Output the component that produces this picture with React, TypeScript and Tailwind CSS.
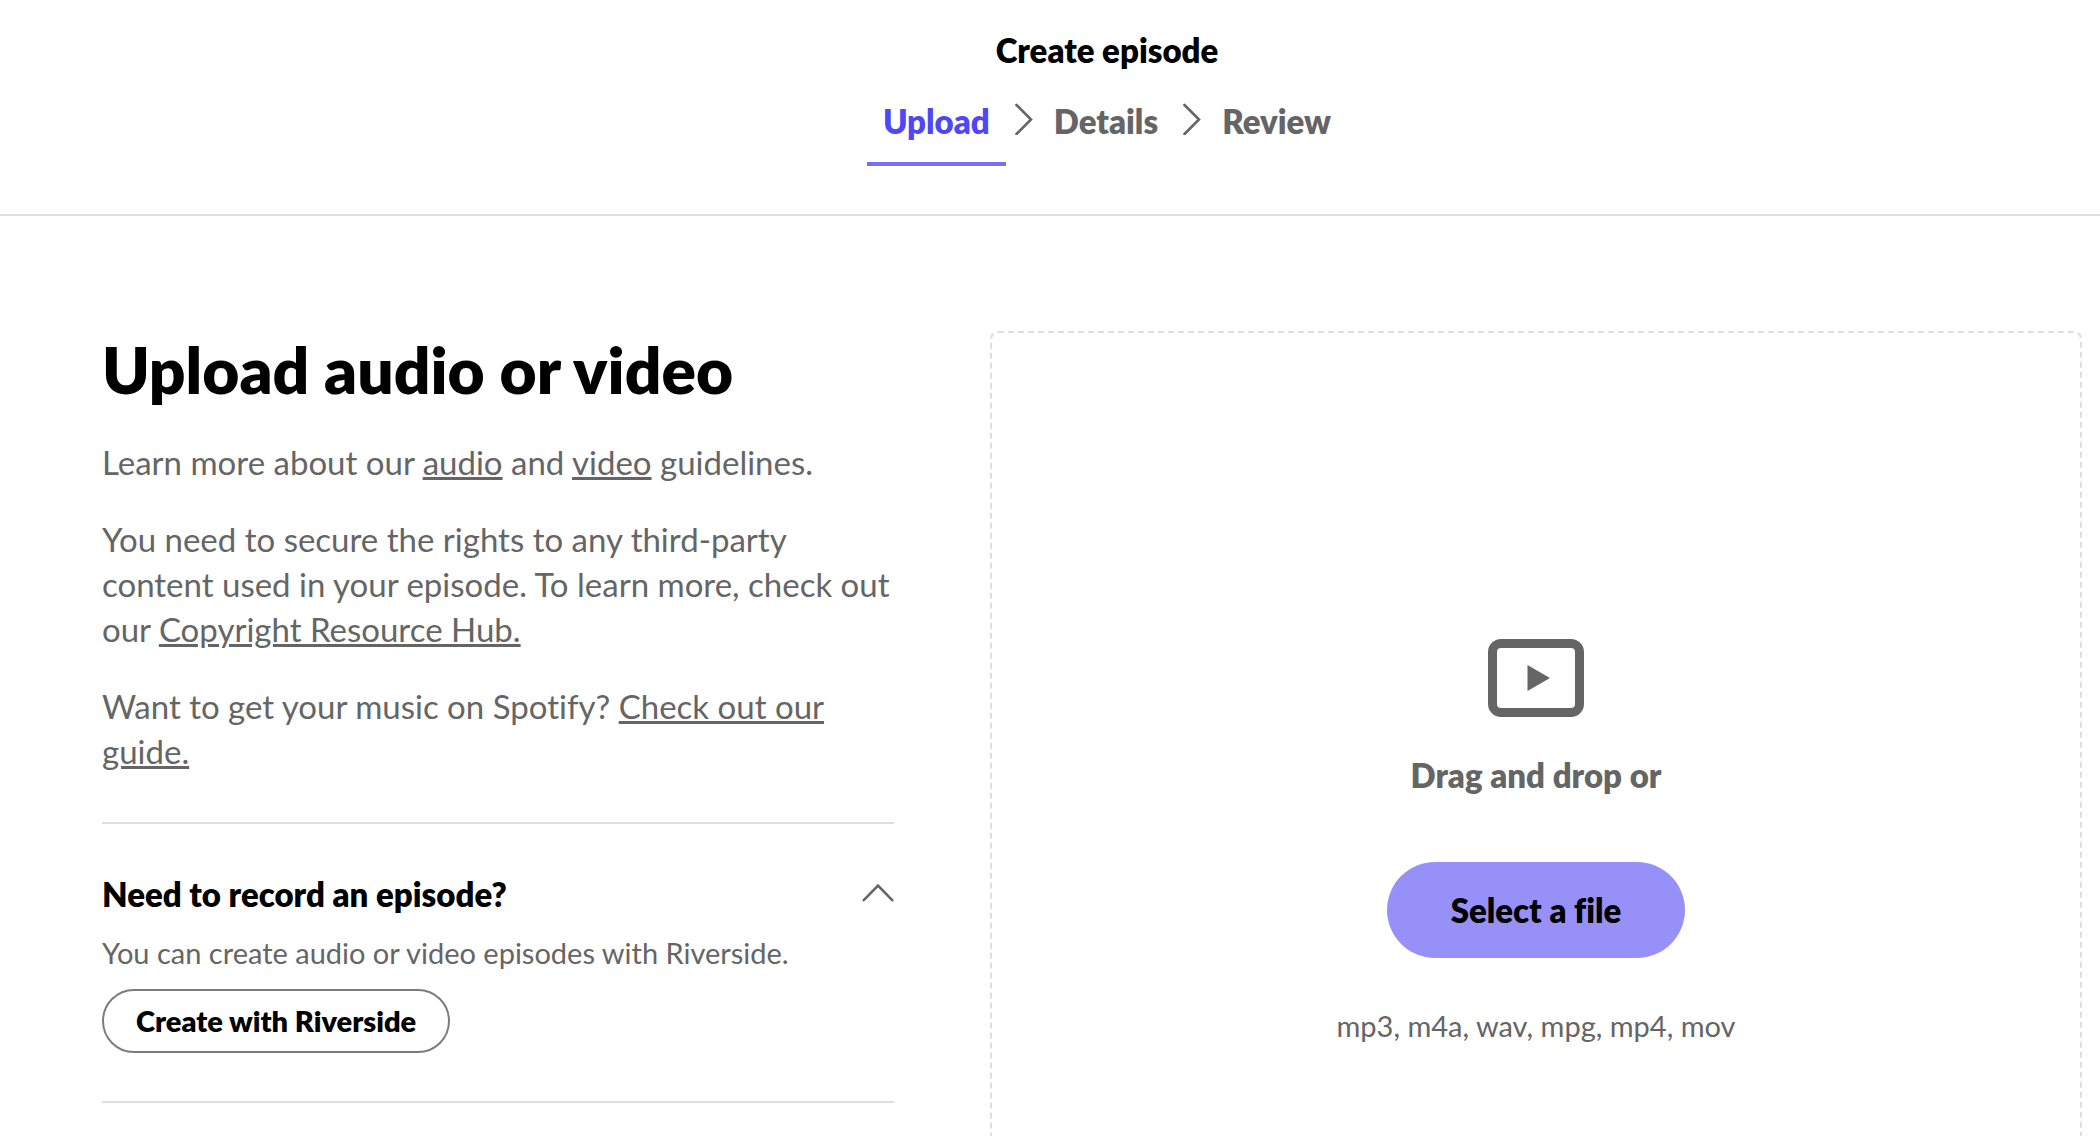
import { useState } from 'react';

const steps = ['Upload', 'Details', 'Review'];

const StepArrow = () => (
    <svg viewBox="0 0 32 32" className="w-8 h-8 mt-1 shrink-0" fill="none" stroke="#656565" strokeWidth="2.6" strokeLinecap="round" aria-hidden="true">
        <path d="M10.5 2 25 16.5 10.5 31" />
    </svg>
);

const Header = () => (
    <header className="border-b-2 border-[#dedede] pl-[114px] pt-7 pb-12 flex flex-col items-center">
        <h1 className="text-[33px] leading-[45px] font-extrabold">Create episode</h1>
        <nav aria-label="Episode steps" className="mt-[26px]">
            <ol className="flex items-start">
                {steps.map((step, index) => (
                    <li key={step} className="flex items-start">
                        {index > 0 && <StepArrow />}
                        <a
                            href={`#${step.toLowerCase()}`}
                            aria-current={index === 0 ? 'step' : undefined}
                            className={
                                index === 0
                                    ? 'px-4 pb-[18px] border-b-4 border-[#7570f5] text-[33px] leading-[45px] font-extrabold text-[#4f46f5]'
                                    : 'px-4 pb-[18px] border-b-4 border-transparent text-[33px] leading-[45px] font-extrabold text-[#656565]'
                            }
                        >
                            {step}
                        </a>
                    </li>
                ))}
            </ol>
        </nav>
    </header>
);

const RecordSection = () => {
    const [open, setOpen] = useState(true);

    return (
        <section className="mt-12 pt-12 pb-12 border-y-2 border-[#dedede]">
            <h3>
                <button
                    type="button"
                    aria-expanded={open}
                    aria-controls="record-panel"
                    onClick={() => setOpen(!open)}
                    className="w-full flex items-center justify-between text-left text-[33px] leading-[45px] font-extrabold"
                >
                    Need to record an episode?
                    <svg
                        viewBox="0 0 32 32"
                        className={open ? 'w-8 h-8' : 'w-8 h-8 rotate-180'}
                        fill="none"
                        stroke="#656565"
                        strokeWidth="2.6"
                        strokeLinecap="round"
                        aria-hidden="true"
                    >
                        <path d="M1.8 21.2 16 6.7 30.2 21.2" />
                    </svg>
                </button>
            </h3>
            {open && (
                <div id="record-panel" className="mt-4">
                    <p className="text-[29px] leading-10 text-[#656565]">You can create audio or video episodes with Riverside.</p>
                    <button type="button" className="mt-4 h-16 px-8 rounded-full border-2 border-[#7c7c7c] text-[29px] leading-10 font-extrabold">
                        Create with Riverside
                    </button>
                </div>
            )}
        </section>
    );
};

const UploadInfo = () => (
    <div>
        <h2 className="text-[64px] leading-[77px] font-extrabold">Upload audio or video</h2>
        <div className="mt-8 space-y-8 text-[33px] leading-[45px] text-[#656565]">
            <p>
                Learn more about our <a href="#audio" className="underline">audio</a> and{' '}
                <a href="#video" className="underline">video</a> guidelines.
            </p>
            <p>
                You need to secure the rights to any third-party content used in your episode. To learn more, check out our{' '}
                <a href="#copyright" className="underline">Copyright Resource Hub.</a>
            </p>
            <p>
                Want to get your music on Spotify? <a href="#guide" className="underline">Check out our guide.</a>
            </p>
        </div>
        <RecordSection />
    </div>
);

const DropZone = () => (
    <div className="min-h-[1018px] rounded-lg border-2 border-dashed border-[#dedede] pt-[306px] flex flex-col items-center">
        <svg viewBox="0 0 96 78" className="w-24 h-[78px]" aria-hidden="true">
            <rect x="4.5" y="4.5" width="87" height="69" rx="8.5" fill="none" stroke="#656565" strokeWidth="9" />
            <path d="M39.5 26v26L62 39z" fill="#656565" />
        </svg>
        <p className="mt-9 text-[33px] leading-[45px] font-extrabold text-[#656565]">Drag and drop or</p>
        <button type="button" className="mt-16 h-24 px-16 rounded-full bg-[#9790f8] text-[33px] leading-[45px] font-extrabold">
            Select a file
        </button>
        <p className="mt-12 text-[29px] leading-10 text-[#656565]">mp3, m4a, wav, mpg, mp4, mov</p>
    </div>
);

const App = () => {
    return (
        <div className="h-screen flex flex-col overflow-hidden bg-white text-black font-['Lato',sans-serif] [font-variant-ligatures:none]">
            <Header />
            <main className="flex-1 min-h-0 grid grid-cols-[792fr_1092fr] items-start gap-24 pt-[115px] pl-[102px] pr-[18px]">
                <UploadInfo />
                <DropZone />
            </main>
        </div>
    );
};

export default App;
